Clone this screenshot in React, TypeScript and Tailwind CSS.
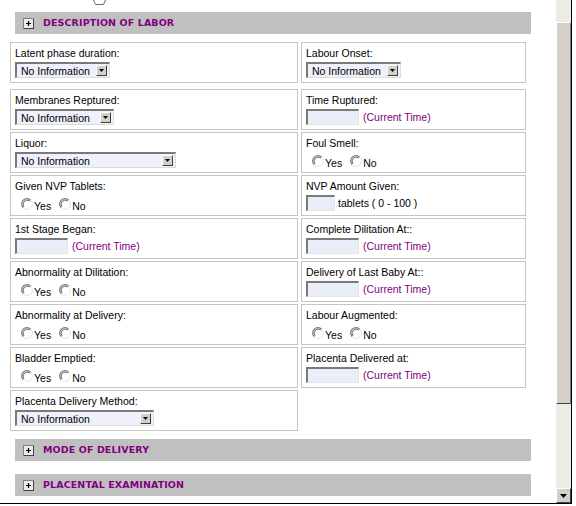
import React from "react";

const PlusBox = () => (
  <svg width="11" height="11" viewBox="0 0 11 11">
    <rect x="0.5" y="0.5" width="10" height="10" fill="#ececec" stroke="#808080" />
    <line x1="10.5" y1="1" x2="10.5" y2="11" stroke="#404040" />
    <line x1="1" y1="10.5" x2="11" y2="10.5" stroke="#404040" />
    <path d="M3 5.5h5M5.5 3v5" stroke="#000" strokeWidth="1.2" />
  </svg>
);

const SectionBar = ({ title, className }: { title: string; className?: string }) => (
  <div className={"ml-[15px] w-[516px] h-[22px] bg-[#c0c0c0] flex items-center pl-[8px] gap-[9px] " + (className || "")}>
    <PlusBox />
    <span className="font-['DejaVu_Sans',Verdana,sans-serif] font-bold text-[9.5px] text-[#800080] tracking-[0.1px]">{title}</span>
  </div>
);

const Radio = () => (
  <svg width="12" height="12" viewBox="0 0 12 12" className="shrink-0">
    <circle cx="6" cy="6" r="5.3" fill="#fff" />
    <path d="M2.2 9.8A5.3 5.3 0 0 1 9.8 2.2" fill="none" stroke="#7c7c7c" strokeWidth="1.2" />
    <path d="M3 8.9A4.2 4.2 0 0 1 8.9 3" fill="none" stroke="#3a3a3a" strokeWidth="0.8" />
    <path d="M9.8 2.2A5.3 5.3 0 0 1 2.2 9.8" fill="none" stroke="#e4e4e4" strokeWidth="1" />
  </svg>
);

const Radios = () => (
  <div className="flex items-end h-[15px] mt-[2px] pl-[6px]">
    <Radio />
    <span className="ml-[1px] mr-[8px] leading-[12px] translate-y-[2px]">Yes</span>
    <Radio />
    <span className="ml-[1px] leading-[12px] translate-y-[2px]">No</span>
  </div>
);

const DropButton = () => (
  <div className="w-[11px] h-[11px] mr-[2px] bg-[#d4d0c8] border-t border-l border-t-white border-l-white border-b border-r border-b-[#404040] border-r-[#404040] flex items-center justify-center">
    <svg width="5" height="3" viewBox="0 0 5 3">
      <path d="M0 0h5L2.5 3z" fill="#000" />
    </svg>
  </div>
);

const Select = ({ w }: { w: string }) => (
  <div className={"mt-[2px] h-[16px] flex items-center bg-[#eef1fb] border-t-2 border-l-2 border-t-[#7a7a7a] border-l-[#7a7a7a] border-b border-r border-b-[#dcdcdc] border-r-[#dcdcdc] " + w}>
    <span className="flex-1 pl-[4px] leading-[12px]">No Information</span>
    <DropButton />
  </div>
);

const Box = ({ w }: { w: string }) => (
  <div className={"h-[16px] bg-[#e9eef9] border-t-2 border-l-2 border-t-[#7a7a7a] border-l-[#7a7a7a] border-b border-r border-b-[#e4e4e4] border-r-[#e4e4e4] " + w} />
);

const TimeInput = () => (
  <div className="mt-[2px] flex items-center gap-[4px]">
    <Box w="w-[53px]" />
    <span className="text-[#800080] leading-[12px]">(Current Time)</span>
  </div>
);

const AmountInput = () => (
  <div className="mt-[2px] flex items-center gap-[3px]">
    <Box w="w-[29px]" />
    <span className="leading-[12px]">tablets ( 0 - 100 )</span>
  </div>
);

const Cell = ({ label, children, wide }: { label: string; children: React.ReactNode; wide?: boolean }) => (
  <div className={"h-[41px] bg-white border border-[#c6c6c6] pt-[4px] pl-[4px] " + (wide ? "w-[288px]" : "w-[225px]")}>
    <div className="h-[13px] leading-[13px]">{label}</div>
    {children}
  </div>
);

type Row = [string, React.ReactNode, string | null, React.ReactNode];

const rows: Row[] = [
  ["Latent phase duration:", <Select w="w-[95px]" />, "Labour Onset:", <Select w="w-[95px]" />],
  ["Membranes Reptured:", <Select w="w-[99px]" />, "Time Ruptured:", <TimeInput />],
  ["Liquor:", <Select w="w-[161px]" />, "Foul Smell:", <Radios />],
  ["Given NVP Tablets:", <Radios />, "NVP Amount Given:", <AmountInput />],
  ["1st Stage Began:", <TimeInput />, "Complete Dilitation At::", <TimeInput />],
  ["Abnormality at Dilitation:", <Radios />, "Delivery of Last Baby At::", <TimeInput />],
  ["Abnormality at Delivery:", <Radios />, "Labour Augmented:", <Radios />],
  ["Bladder Emptied:", <Radios />, "Placenta Delivered at:", <TimeInput />],
  ["Placenta Delivery Method:", <Select w="w-[139px]" />, null, null],
];

const Scrollbar = () => (
  <div className="w-[15px] h-full flex flex-col bg-[#ecebe4]">
    <div className="h-[22px]" />
    <div className="h-[382px] bg-[#d4d0c8] border-t border-l border-t-white border-l-white border-b border-r border-b-[#404040] border-r-[#808080]" />
    <div className="flex-1" />
    <div className="h-[15px] bg-[#d4d0c8] border-t border-l border-t-white border-l-white border-b border-r border-b-[#404040] border-r-[#404040] flex items-center justify-center">
      <svg width="7" height="4" viewBox="0 0 7 4">
        <path d="M0 0h7L3.5 4z" fill="#000" />
      </svg>
    </div>
  </div>
);

export default function App() {
  return (
    <div className="w-[576px] h-[506px] bg-white overflow-hidden font-['Liberation_Sans',Arial,sans-serif] text-[10.5px] text-black">
      <div className="w-[572px] h-[504px] flex border-r border-b border-black">
        <div className="flex-1 flex flex-col">
          <div className="h-[12px] pl-[93px]">
            <svg width="13" height="6" viewBox="0 0 13 6">
              <path d="M0.5 0L2.5 4.5H10.5L12.5 0" fill="#fff" stroke="#6a6a6a" strokeWidth="1" />
            </svg>
          </div>
          <SectionBar title="DESCRIPTION OF LABOR" />
          <div className="mt-[8px] ml-[10px] flex flex-col gap-[2px]">
            {rows.map(([l, lc, r, rc], i) => (
              <div key={i} className={"flex gap-[3px] " + (i === 0 ? "mb-[4px]" : "")}>
                <Cell label={l} wide>
                  {lc}
                </Cell>
                {r && <Cell label={r}>{rc}</Cell>}
              </div>
            ))}
          </div>
          <SectionBar title="MODE OF DELIVERY" className="mt-[8px]" />
          <SectionBar title="PLACENTAL EXAMINATION" className="mt-[13px]" />
        </div>
        <Scrollbar />
      </div>
    </div>
  );
}
